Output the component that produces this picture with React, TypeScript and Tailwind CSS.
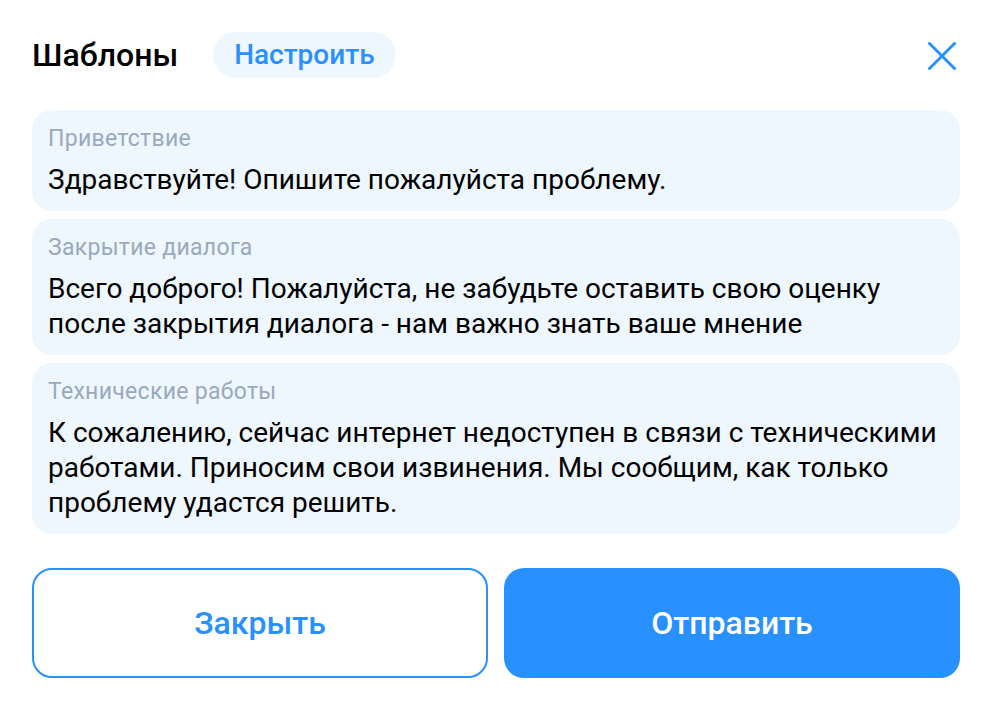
type Template = {
    title: string;
    text: string;
};

const templates: Template[] = [
    {
        title: "Приветствие",
        text: "Здравствуйте! Опишите пожалуйста проблему.",
    },
    {
        title: "Закрытие диалога",
        text: "Всего доброго! Пожалуйста, не забудьте оставить свою оценку после закрытия диалога - нам важно знать ваше мнение",
    },
    {
        title: "Технические работы",
        text: "К сожалению, сейчас интернет недоступен в связи с техническими работами. Приносим свои извинения. Мы сообщим, как только проблему удастся решить.",
    },
];

function CloseIcon ()
{
    return (
        <svg width="28" height="28" viewBox="0 0 28 28" fill="none">
            <path d="M1.5 1.5L26.5 26.5M26.5 1.5L1.5 26.5" stroke="currentColor" strokeWidth="3" strokeLinecap="round" />
        </svg>
    );
}

function TemplateCard ( { title, text }: Template )
{
    return (
        <div className="rounded-[20px] bg-[#eef6fe] px-4 pt-[17px] pb-[14px]">
            <div className="text-[23px] leading-6 tracking-[0.3px] text-[#9aa9bd] mb-[11px]">{ title }</div>
            <div className="text-[28px] leading-[35px] text-black">{ text }</div>
        </div>
    );
}

export default function App ()
{
    return (
        <div
            className="min-h-screen bg-white px-8 pt-8 pb-8"
            style={ { fontFamily: "Roboto, 'Noto Sans', sans-serif" } }
        >
            <div className="flex items-center h-[46px]">
                <h1 className="text-[32px] font-medium text-black leading-none">Шаблоны</h1>
                <button className="ml-[35px] h-[46px] px-[21px] rounded-full bg-[#eef6fe] text-[28px] font-medium text-[#2990ff] leading-none">
                    Настроить
                </button>
                <button className="ml-auto mr-1 mt-[2px] text-[#2990ff]">
                    <CloseIcon />
                </button>
            </div>

            <div className="mt-8 flex flex-col gap-2">
                { templates.map( ( t ) => (
                    <TemplateCard key={ t.title } title={ t.title } text={ t.text } />
                ) ) }
            </div>

            <div className="mt-[34px] grid grid-cols-2 gap-4">
                <button className="h-[110px] rounded-[20px] border-2 border-[#2990ff] bg-white text-[32px] font-medium text-[#2990ff]">
                    Закрыть
                </button>
                <button className="h-[110px] rounded-[20px] bg-[#2990ff] text-[32px] font-medium text-white">
                    Отправить
                </button>
            </div>
        </div>
    );
}
